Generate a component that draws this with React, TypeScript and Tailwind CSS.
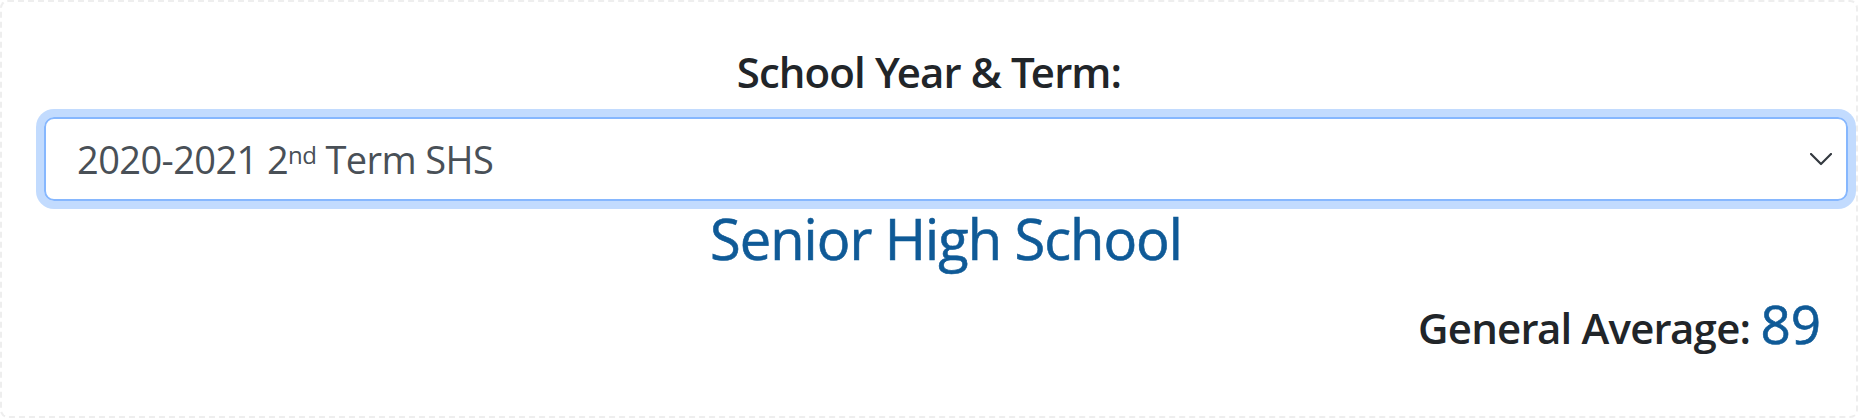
export default function App() {
  return (
    <div className="w-[1858px] h-[418px] bg-white font-['Open_Sans',sans-serif]">
      <div className="h-[418px] rounded-lg border-2 border-dashed border-[#eeeeee] bg-white pt-[46px]">
        <h2 className="text-center text-[42px] leading-[48px] font-semibold font-['Open_Sans_SemiBold','Open_Sans',sans-serif] tracking-[-0.9px] text-[#212529]">
          School Year &amp; Term:
        </h2>

        <div className="pl-[42px] pr-[8px] mt-[21px]">
          <div className="flex h-[84px] items-center justify-between rounded-[10px] border-2 border-[#86b7fe] pl-[31px] pr-[14px] shadow-[0_0_0_8px_#c2dbfe] text-[38px] tracking-[-0.6px] text-[#495057]">
            <span className="leading-none">
              2020-2021 2<sup className="text-[24px] align-[10px] top-0 leading-none">nd</sup> Term SHS
            </span>
            <svg width="22" height="13" viewBox="0 0 22 13" fill="none">
              <path d="M1 1l10 10 10-10" stroke="#343a40" strokeWidth="2.2" strokeLinecap="round" strokeLinejoin="round" />
            </svg>
          </div>

          <h3 className="mt-[5px] text-center text-[56px] leading-[64px] font-medium font-['Open_Sans_Medium','Open_Sans',sans-serif] tracking-[-1px] [-webkit-text-stroke:0.6px] text-[#0f5a97]">
            Senior High School
          </h3>

          <div className="mt-[24px] pr-[27px] text-right leading-[60px]">
            <span className="text-[42px] font-semibold font-['Open_Sans_SemiBold','Open_Sans',sans-serif] tracking-[-0.8px] text-[#212529]">General Average: </span>
            <span className="text-[53px] font-medium font-['Open_Sans_Medium','Open_Sans',sans-serif] [-webkit-text-stroke:0.6px] text-[#0f5a97]">89</span>
          </div>
        </div>
      </div>
    </div>
  );
}
